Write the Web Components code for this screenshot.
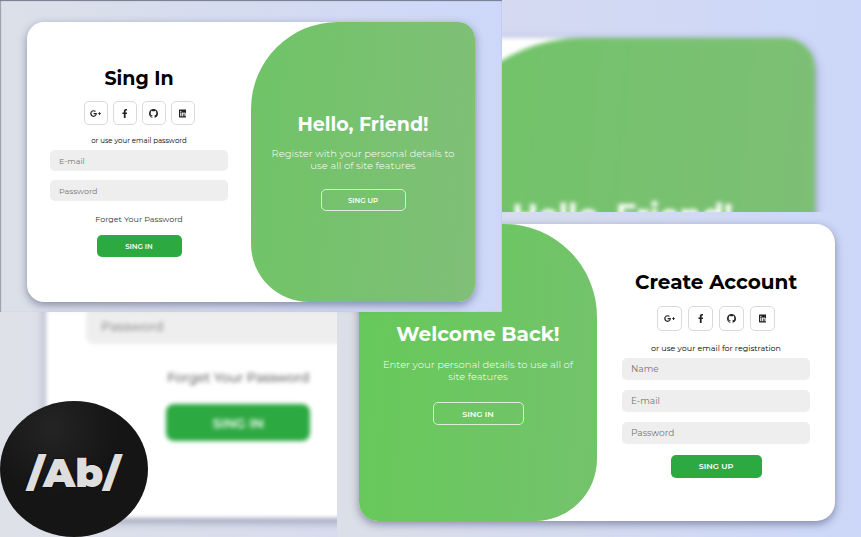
<!DOCTYPE html>
<html lang="en">
<head>
<meta charset="utf-8">
<meta name="viewport" content="width=device-width, initial-scale=1">
<title>Sign in and registration showcase</title>
<style>
html, body { margin: 0; height: 100%; }
body { font-family: Montserrat, Inter, "Open Sans", sans-serif; color: #000; overflow: hidden; }
</style>
</head>
<body>
<show-case></show-case>
<script>
const define = (name, html, setup) => {
  const template = document.createElement('template');
  template.innerHTML = html;
  customElements.define(name, class extends HTMLElement {
    constructor() {
      super();
      this.attachShadow({ mode: 'open' }).append(template.content.cloneNode(true));
    }
    connectedCallback() { if (setup) setup(this, this.shadowRoot); }
  });
};

const icons = {
  google: ['Google Plus', '0 0 640 512', 'M386.061 228.496c1.834 9.692 3.143 19.384 3.143 31.956C389.204 370.205 315.599 448 204.8 448c-106.084 0-192-85.915-192-192s85.916-192 192-192c51.864 0 95.083 18.859 128.611 50.292l-52.126 50.03c-14.145-13.621-39.028-29.599-76.485-29.599-65.484 0-118.92 54.221-118.92 121.277 0 67.056 53.436 121.277 118.92 121.277 75.961 0 104.513-54.745 108.965-82.773H204.8v-66.009h181.261zm185.406 6.437V179.2h-56.001v55.733h-55.733v56.001h55.733v55.733h56.001v-55.733H627.2v-56.001h-55.733z'],
  facebook: ['Facebook', '0 0 320 512', 'M279.14 288l14.22-92.66h-88.91v-60.13c0-25.35 12.42-50.06 52.24-50.06h40.42V6.26S260.43 0 225.36 0c-73.22 0-121.08 44.38-121.08 124.72v70.62H22.89V288h81.39v224h100.17V288z'],
  github: ['GitHub', '0 0 16 16', 'M8 0C3.58 0 0 3.58 0 8c0 3.54 2.29 6.53 5.47 7.59.4.07.55-.17.55-.38 0-.19-.01-.82-.01-1.49-2.01.37-2.53-.49-2.69-.94-.09-.23-.48-.94-.82-1.13-.28-.15-.68-.52-.01-.53.63-.01 1.08.58 1.23.82.72 1.21 1.87.87 2.33.66.07-.52.28-.87.51-1.07-1.78-.2-3.64-.89-3.64-3.95 0-.87.31-1.59.82-2.15-.08-.2-.36-1.02.08-2.12 0 0 .67-.21 2.2.82.64-.18 1.32-.27 2-.27s1.36.09 2 .27c1.53-1.04 2.2-.82 2.2-.82.44 1.1.16 1.92.08 2.12.51.56.82 1.27.82 2.15 0 3.07-1.87 3.75-3.65 3.95.29.25.54.73.54 1.48 0 1.07-.01 1.93-.01 2.2 0 .21.15.46.55.38A8.01 8.01 0 0 0 16 8c0-4.42-3.58-8-8-8z'],
  linkedin: ['LinkedIn', '0 0 448 512', 'M416 32H31.9C14.3 32 0 46.5 0 64.3v383.4C0 465.5 14.3 480 31.9 480H416c17.6 0 32-14.5 32-32.3V64.3c0-17.8-14.4-32.3-32-32.3zM135.4 416H69V202.2h66.5V416zm-33.2-243c-21.3 0-38.5-17.3-38.5-38.5S80.9 96 102.2 96c21.2 0 38.5 17.3 38.5 38.5 0 21.3-17.2 38.5-38.5 38.5zm282.1 243h-66.4V312c0-24.8-.5-56.7-34.5-56.7-34.6 0-39.9 27-39.9 54.9V416h-66.4V202.2h63.7v29.2h.9c8.9-16.8 30.6-34.5 62.9-34.5 67.2 0 79.7 44.3 79.7 101.9V416z']
};

define('social-link', `
<style>
:host { display: block; }
a { display: flex; align-items: center; justify-content: center; box-sizing: border-box;
  width: var(--social); height: var(--social); border: 1px solid #d9d9d9; border-radius: 20%; color: #222; }
svg { height: var(--glyph); fill: currentColor; }
</style>
<a href="#"><svg aria-hidden="true"><path/></svg></a>`, (host, root) => {
  const [label, box, d] = icons[host.getAttribute('icon')];
  root.querySelector('a').setAttribute('aria-label', label);
  root.querySelector('svg').setAttribute('viewBox', box);
  root.querySelector('path').setAttribute('d', d);
});

define('text-field', `
<style>
:host { display: block; }
input { display: block; box-sizing: border-box; width: 100%; height: var(--field); border: 0; outline: 0;
  border-radius: var(--corner); padding: 0 var(--field-pad); background: #eee; font: 400 var(--text) Montserrat, Inter, sans-serif; }
input::placeholder { color: #757575; opacity: 1; }
</style>
<input>`, (host, root) => {
  const input = root.querySelector('input');
  const label = host.getAttribute('label');
  input.type = host.getAttribute('type') || 'text';
  input.placeholder = label;
  input.setAttribute('aria-label', label);
});

define('action-button', `
<style>
:host { display: block; }
button { display: block; box-sizing: border-box; height: var(--button); padding: 0; width: var(--button-width);
  border: 1px solid transparent; border-radius: var(--corner); background: #2da942; color: #fff;
  font: 600 var(--label) Montserrat, Inter, sans-serif; text-transform: uppercase; white-space: nowrap; }
:host([outline]) button { background: transparent; border-color: #d8efd5; }
</style>
<button type="button"><slot></slot></button>`);

define('auth-form', `
<style>
:host { display: flex; flex-direction: column; justify-content: center; min-width: 0; }
form { display: flex; flex-direction: column; align-items: center; padding: 0 var(--form-pad); }
h1 { margin: 0; font-size: var(--title); line-height: var(--title-line); font-weight: 700; white-space: nowrap; }
nav { display: flex; gap: var(--social-gap); margin: var(--nav-top) 0 var(--nav-bottom); }
.note { font-size: var(--note); line-height: var(--line); white-space: nowrap; }
.fields { display: grid; gap: var(--field-gap); align-self: stretch; margin: var(--fields-top) 0 var(--fields-bottom); }
::slotted(a) { color: #333; font-size: var(--text); line-height: var(--line); text-decoration: none; margin-bottom: var(--nav-bottom); white-space: nowrap; }
</style>
<form>
<h1><slot name="title"></slot></h1>
<nav><social-link icon="google"></social-link><social-link icon="facebook"></social-link><social-link icon="github"></social-link><social-link icon="linkedin"></social-link></nav>
<div class="note"><slot name="note"></slot></div>
<div class="fields"><slot name="field"></slot></div>
<slot name="link"></slot>
<slot name="action"></slot>
</form>`);

define('welcome-panel', `
<style>
:host { display: flex; flex-direction: column; justify-content: center; align-items: center; min-width: 0; text-align: center;
  color: #fff; background: linear-gradient(95deg, var(--green-from), var(--green-to)); padding: 0 var(--panel-pad);
  border-radius: var(--curve); }
h1 { margin: 0 0 var(--panel-gap); font-size: var(--title); line-height: var(--title-line); font-weight: 700; white-space: nowrap; }
p { margin: 0 0 var(--panel-bottom); font-size: var(--copy); line-height: var(--copy-line); font-weight: 300; }
</style>
<h1><slot name="title"></slot></h1>
<p><slot></slot></p>
<slot name="action"></slot>`);

define('auth-card', `
<style>
:host { display: grid; grid-template-columns: minmax(0, 1fr) minmax(0, 1fr); overflow: hidden; background: #fff;
  border-radius: var(--card-radius); box-shadow: 0 3px 9px rgba(35, 40, 80, .45); }
</style>
<slot></slot>`);

define('brand-badge', `
<style>
:host { display: flex; align-items: center; justify-content: center; box-sizing: border-box; padding-top: 8px; border-radius: 50%;
  color: #dedede; font-size: 40px; font-weight: 900; line-height: 48px; text-shadow: 0 0 2px #000;
  background: radial-gradient(circle at 35% 20%, #242424, transparent 45%), #151515; }
</style>
<slot></slot>`);

define('show-case', `
<style>
:host { display: grid; position: relative; height: 100%; overflow: hidden;
  grid-template-columns: minmax(0, 337fr) minmax(0, 165fr) minmax(0, 359fr);
  grid-template-rows: minmax(0, 212fr) minmax(0, 100fr) minmax(0, 225fr); }
.scene { display: grid; box-sizing: border-box; }
.backdrop { grid-area: 1 / 1 / 4 / 4; padding: 38px 46px 19px; background: linear-gradient(90deg, #dee1e8, #d5daf0 55%, #ccd7f9);
  --title: 32px; --title-line: 40px; --social: 40px; --glyph: 15px; --social-gap: 10px; --nav-top: 16px; --nav-bottom: 17px;
  --note: 12px; --line: 20px; --text: 13px; --field: 36px; --field-pad: 15px; --field-gap: 15px; --fields-top: 9px; --fields-bottom: 23px;
  --form-pad: 40px; --button: 37px; --button-width: 144px; --label: 13px; --corner: 8px; --card-radius: 30px;
  --panel-pad: 30px; --panel-gap: 19px; --copy: 14px; --copy-line: 20px; --panel-bottom: 106px;
  --green-from: #70c468; --green-to: #7ebf76; --curve: 150px 0 0 100px; }
.backdrop auth-card { filter: blur(2px); }
.front { grid-area: 1 / 1 / 3 / 3; padding: 22px 27px 10px; background: linear-gradient(90deg, #dce0e8, #cdd7f9); z-index: 2;
  --title: 19px; --title-line: 24px; --social: 24px; --glyph: 9px; --social-gap: 5px; --nav-top: 10px; --nav-bottom: 10px;
  --note: 7px; --line: 12px; --text: 8px; --field: 21px; --field-pad: 9px; --field-gap: 9px; --fields-top: 3px; --fields-bottom: 12px;
  --form-pad: 23px; --button: 22px; --button-width: 85px; --label: 7px; --corner: 5px; --card-radius: 17px;
  --panel-pad: 18px; --panel-gap: 11px; --copy: 10px; --copy-line: 12px; --panel-bottom: 17px;
  --green-from: #6fc466; --green-to: #80bf78; --curve: 87px 0 0 58px;
  box-shadow: inset 0 1px 1px #74798c, inset 1px 0 1px #9da1ad; }
.register { grid-area: 2 / 2 / 4 / 4; padding: 12px 26px 16px 22px; background: linear-gradient(90deg, #dcdfe8, #ccd7f9); z-index: 1;
  --title: 20px; --title-line: 28px; --social: 25px; --glyph: 9px; --social-gap: 6px; --nav-top: 10px; --nav-bottom: 11px;
  --note: 8px; --line: 12px; --text: 9px; --field: 22px; --field-pad: 9px; --field-gap: 10px; --fields-top: 4px; --fields-bottom: 11px;
  --form-pad: 25px; --button: 23px; --button-width: 91px; --label: 8px; --corner: 5px; --card-radius: 19px;
  --panel-pad: 18px; --panel-gap: 11px; --copy: 10px; --copy-line: 12px; --panel-bottom: 19px;
  --green-from: #66c959; --green-to: #74c36c; --curve: 0 93px 62px 0; }
brand-badge { position: absolute; left: 0; bottom: 0; width: 148px; height: 136px; z-index: 3; }
</style>
<div class="scene backdrop" inert>
<auth-card>
<auth-form><span slot="title">Sing In</span><span slot="note">or use your email password</span>
<text-field slot="field" label="E-mail" type="email"></text-field><text-field slot="field" label="Password" type="password"></text-field>
<a slot="link" href="#">Forget Your Password</a><action-button slot="action">Sing In</action-button></auth-form>
<welcome-panel><span slot="title">Hello, Friend!</span></welcome-panel>
</auth-card>
</div>
<div class="scene register">
<auth-card>
<welcome-panel><span slot="title">Welcome Back!</span>Enter your personal details to use all of site features<action-button slot="action" outline>Sing In</action-button></welcome-panel>
<auth-form><span slot="title">Create Account</span><span slot="note">or use your email for registration</span>
<text-field slot="field" label="Name"></text-field><text-field slot="field" label="E-mail" type="email"></text-field><text-field slot="field" label="Password" type="password"></text-field>
<action-button slot="action">Sing Up</action-button></auth-form>
</auth-card>
</div>
<div class="scene front">
<auth-card>
<auth-form><span slot="title">Sing In</span><span slot="note">or use your email password</span>
<text-field slot="field" label="E-mail" type="email"></text-field><text-field slot="field" label="Password" type="password"></text-field>
<a slot="link" href="#">Forget Your Password</a><action-button slot="action">Sing In</action-button></auth-form>
<welcome-panel><span slot="title">Hello, Friend!</span>Register with your personal details to use all of site features<action-button slot="action" outline>Sing Up</action-button></welcome-panel>
</auth-card>
</div>
<brand-badge>/Ab/</brand-badge>`);
</script>
</body>
</html>
